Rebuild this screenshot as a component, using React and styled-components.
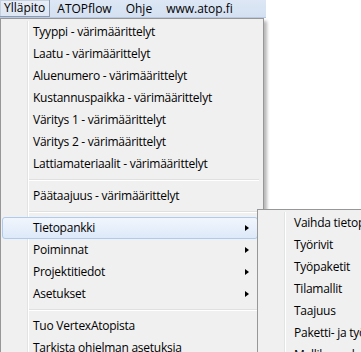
import React from 'react'
import styled, { createGlobalStyle } from 'styled-components'

const Global = createGlobalStyle`
  body {
    margin: 0;
    background: #ffffff;
    font-family: "Open Sans", "Noto Sans", sans-serif;
    font-size: 12px;
    color: #000;
  }
`

const Screen = styled.div`
  position: relative;
  width: 361px;
  height: 352px;
  overflow: hidden;
  background: #ffffff;
`

const MenuBar = styled.div`
  display: flex;
  align-items: stretch;
  width: 266px;
  height: 18px;
  background: linear-gradient(#dde7f5, #d4e0f1);
  border-bottom: 1px solid #b9c9df;
  box-sizing: border-box;
`

const BarItem = styled.div`
  display: flex;
  align-items: center;
  padding: 0 ${p => (p.$open ? 4 : 7)}px 0 ${p => (p.$open ? 4 : 7)}px;
  line-height: 1;
  ${p =>
    p.$open &&
    `
    background: linear-gradient(#e9eef6, #dde6f2);
    border: 1px solid #8d9bb0;
    border-top: none;
    border-left: none;
    box-shadow: inset 1px 1px 0 #c5d0e0;
  `}
`

const Menu = styled.div`
  position: absolute;
  left: ${p => p.$x}px;
  top: ${p => p.$y}px;
  width: ${p => p.$w}px;
  background: #f0f0f0;
  border: 1px solid #979797;
  padding: 2px 1px;
  box-sizing: border-box;
  box-shadow: 3px 3px 3px rgba(0, 0, 0, 0.28);
  &::before {
    content: '';
    position: absolute;
    top: 2px;
    bottom: 0;
    left: 26px;
    width: 1px;
    background: #e2e3e3;
    box-shadow: 1px 0 0 #ffffff;
  }
`

const Item = styled.div`
  position: relative;
  display: flex;
  align-items: center;
  height: 22px;
  margin-right: 4px;
  padding-left: ${p => p.$indent}px;
  padding-right: 8px;
  box-sizing: border-box;
  white-space: nowrap;
  letter-spacing: -0.25px;
  border: 1px solid transparent;
  border-radius: 3px;
  ${p =>
    p.$active &&
    `
    background: linear-gradient(#f1f6fd, #dde9f9);
    border-color: #aecbef;
  `}
`

const Label = styled.span`
  flex: 1;
  position: relative;
  top: -1px;
`

const Arrow = styled.span`
  width: 0;
  height: 0;
  border-top: 3.5px solid transparent;
  border-bottom: 3.5px solid transparent;
  border-left: 4px solid #000;
`

const Separator = styled.div`
  height: 10px;
  margin-left: 27px;
  margin-right: 3px;
  position: relative;
  &::after {
    content: '';
    position: absolute;
    left: 0;
    right: 0;
    top: 4px;
    height: 1px;
    background: #e0e0e0;
    box-shadow: 0 1px 0 #ffffff;
  }
`

const mainItems = [
  'Tyyppi - värimäärittelyt',
  'Laatu - värimäärittelyt',
  'Aluenumero - värimäärittelyt',
  'Kustannuspaikka - värimäärittelyt',
  'Väritys 1 - värimäärittelyt',
  'Väritys 2 - värimäärittelyt',
  'Lattiamateriaalit - värimäärittelyt',
  '-',
  'Päätaajuus - värimäärittelyt',
  '-',
  { label: 'Tietopankki', sub: true, active: true },
  { label: 'Poiminnat', sub: true },
  { label: 'Projektitiedot', sub: true },
  { label: 'Asetukset', sub: true },
  '-',
  'Tuo VertexAtopista',
  'Tarkista ohjelman asetuksia',
  'Lisäasetukset',
]

const subItems = [
  'Vaihda tietopankki',
  'Työrivit',
  'Työpaketit',
  'Tilamallit',
  'Taajuus',
  'Paketti- ja työrivit',
  'Mallikuvaukset',
]

function renderItems(list, indent) {
  return list.map((it, i) => {
    if (it === '-') return <Separator key={i} />
    const item = typeof it === 'string' ? { label: it } : it
    return (
      <Item key={i} $indent={indent} $active={item.active}>
        <Label>{item.label}</Label>
        {item.sub && <Arrow />}
      </Item>
    )
  })
}

export default function App() {
  return (
    <Screen>
      <Global />
      <MenuBar>
        <BarItem $open>Ylläpito</BarItem>
        <BarItem>ATOPflow</BarItem>
        <BarItem>Ohje</BarItem>
        <BarItem>www.atop.fi</BarItem>
      </MenuBar>
      <Menu $x={0} $y={18} $w={264}>
        {renderItems(mainItems, 30)}
      </Menu>
      <Menu $x={257} $y={209} $w={150}>
        {renderItems(subItems, 34)}
      </Menu>
    </Screen>
  )
}
